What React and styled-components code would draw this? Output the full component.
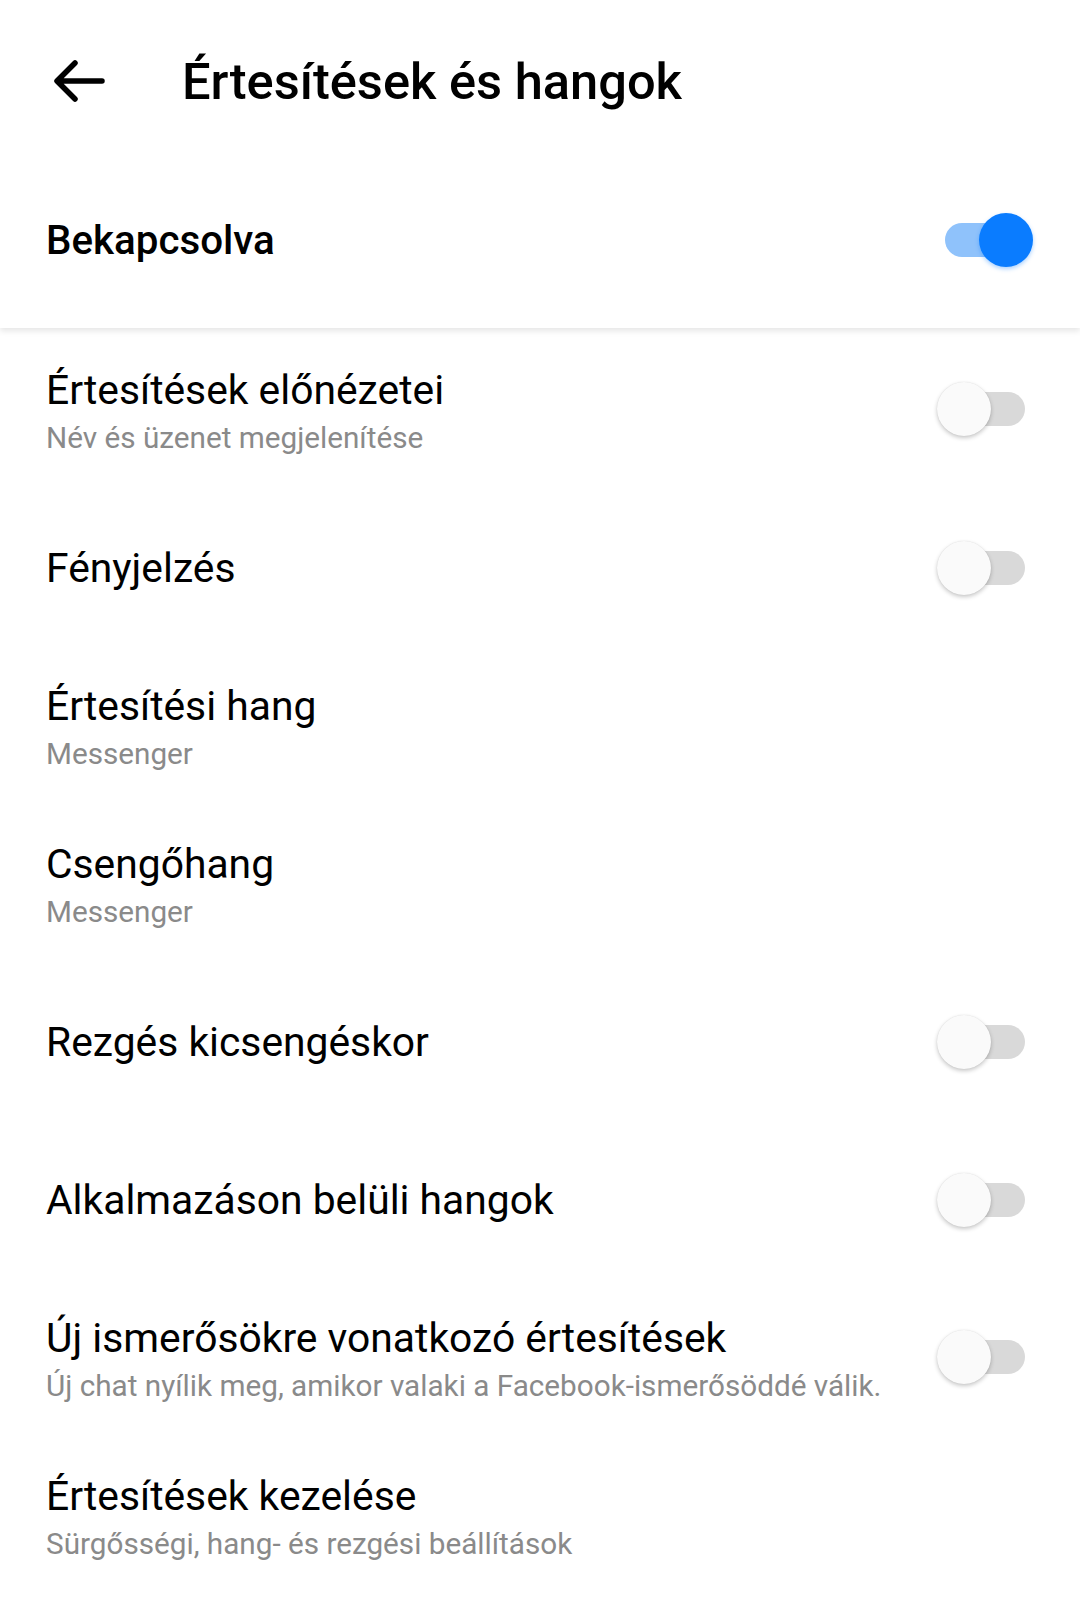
import React from "react";
import styled, { createGlobalStyle } from "styled-components";

const Global = createGlobalStyle`
  html, body { margin: 0; padding: 0; background: #ffffff; }
  body { font-family: Roboto, "Noto Sans", "Liberation Sans", sans-serif; -webkit-font-smoothing: antialiased; }
  * { box-sizing: border-box; }
`;

const Page = styled.div`
  width: 1080px;
  min-height: 1605px;
  background: #fff;
  overflow: hidden;
`;

const Header = styled.header`
  position: relative;
  z-index: 1;
  background: #fff;
  padding-bottom: 10px;
  box-shadow: 0 3px 6px rgba(0, 0, 0, 0.1);
`;

const TopBar = styled.div`
  height: 162px;
  display: flex;
  align-items: center;
  padding-left: 52px;
`;

const BackButton = styled.div`
  width: 54px;
  height: 54px;
  display: flex;
  align-items: center;
  justify-content: center;
  margin-right: 76px;
`;

const Title = styled.h1`
  margin: 0;
  font-size: 50.6px;
  font-weight: 500;
  color: #000;
  letter-spacing: 0;
`;

const Row = styled.div`
  height: ${(p) => p.$h || 158}px;
  display: flex;
  align-items: center;
  justify-content: space-between;
  padding: 0 47px 0 46px;
`;

const TextCol = styled.div`
  display: flex;
  flex-direction: column;
`;

const MainLabel = styled.div`
  font-size: 40.3px;
  font-weight: 500;
  color: #000;
`;

const Label = styled.div`
  font-size: 40.8px;
  font-weight: 400;
  color: #000;
  line-height: 56px;
`;

const Sub = styled.div`
  font-size: 29.7px;
  font-weight: 400;
  color: #8a8a8a;
  line-height: 40px;
`;

const List = styled.div`
  padding-top: 3px;
`;

const SwitchBox = styled.div`
  position: relative;
  width: 96px;
  height: 56px;
  flex-shrink: 0;
  margin-bottom: ${(p) => (p.$raised ? "3px" : "0")};
`;

const Track = styled.div`
  position: absolute;
  left: 8px;
  right: 8px;
  top: 11px;
  height: 34px;
  border-radius: 17px;
  background: ${(p) => (p.$on ? "#8fc2fb" : "#d9d9d9")};
`;

const Thumb = styled.div`
  position: absolute;
  top: 1px;
  left: ${(p) => (p.$on ? "42px" : "0px")};
  width: 54px;
  height: 54px;
  border-radius: 50%;
  background: ${(p) => (p.$on ? "#0a7cff" : "#fafafa")};
  box-shadow: ${(p) =>
    p.$on
      ? "0 2px 4px rgba(10,124,255,0.35)"
      : "0 2px 4px rgba(0,0,0,0.22), 0 0 1px rgba(0,0,0,0.12)"};
`;

const Switch = ({ on, raised }) => (
  <SwitchBox $raised={raised}>
    <Track $on={on} />
    <Thumb $on={on} />
  </SwitchBox>
);

const items = [
  { t: "Értesítések előnézetei", s: "Név és üzenet megjelenítése", sw: true },
  { t: "Fényjelzés", sw: true },
  { t: "Értesítési hang", s: "Messenger" },
  { t: "Csengőhang", s: "Messenger" },
  { t: "Rezgés kicsengéskor", sw: true },
  { t: "Alkalmazáson belüli hangok", sw: true },
  {
    t: "Új ismerősökre vonatkozó értesítések",
    s: "Új chat nyílik meg, amikor valaki a Facebook-ismerősöddé válik.",
    sw: true,
  },
  { t: "Értesítések kezelése", s: "Sürgősségi, hang- és rezgési beállítások" },
];

export default function App() {
  return (
    <Page>
      <Global />
      <Header>
        <TopBar>
          <BackButton>
            <svg width="52" height="44" viewBox="0 0 52 44" fill="none">
              <path
                d="M49 22H5M22 4L4 22l18 18"
                stroke="#000"
                strokeWidth="5.5"
                strokeLinecap="round"
                strokeLinejoin="round"
              />
            </svg>
          </BackButton>
          <Title>Értesítések és hangok</Title>
        </TopBar>
        <Row $h={156}>
          <MainLabel>Bekapcsolva</MainLabel>
          <Switch on />
        </Row>
      </Header>
      <List>
        {items.map((it) => (
          <Row key={it.t}>
            <TextCol>
              <Label>{it.t}</Label>
              {it.s && <Sub>{it.s}</Sub>}
            </TextCol>
            {it.sw && <Switch raised={!!it.s} />}
          </Row>
        ))}
      </List>
    </Page>
  );
}
